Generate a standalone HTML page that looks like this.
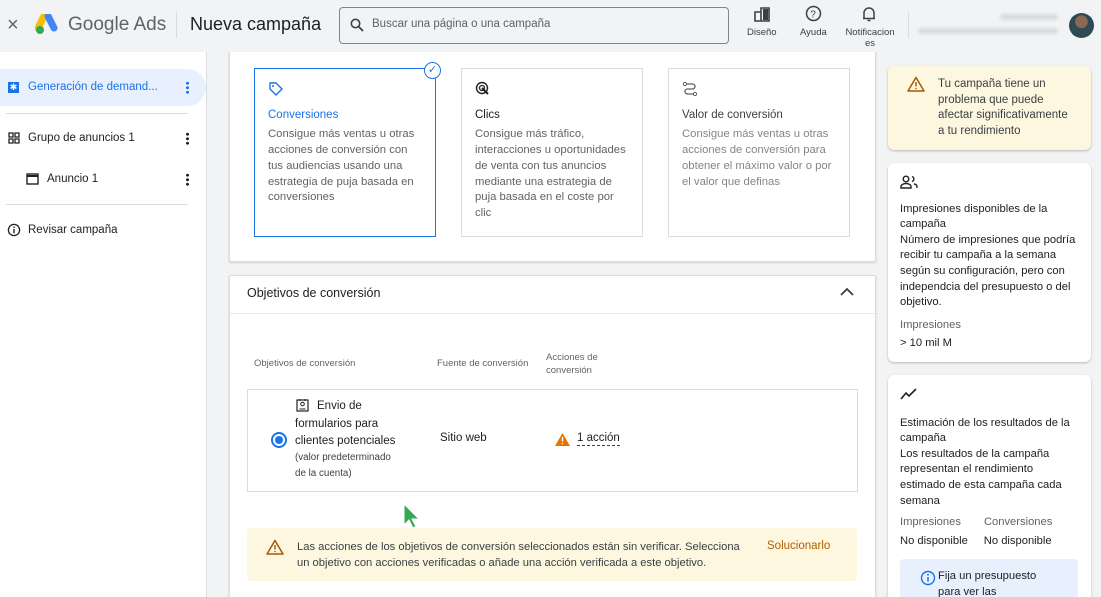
<!DOCTYPE html>
<html style="width:1101px;height:597px;overflow:hidden"><head><meta charset="utf-8"><style>
*{box-sizing:border-box;margin:0;padding:0}
body{width:1101px;height:597px;overflow:hidden;background:#f1f3f4;font-family:"Liberation Sans",sans-serif;color:#202124;position:relative}
.a{position:absolute}
.top{left:0;top:0;width:1101px;height:52px;background:#f1f3f4}
.side{left:0;top:52px;width:207px;height:545px;background:#fff;border-right:1px solid #dadce0}
.card{background:#fff;border:1px solid #dadce0;border-radius:2px}
.opt{position:absolute;top:68px;width:182px;height:169px;border:1px solid #dadce0;padding:12px 13px;font-size:11.3px;line-height:15.7px;color:#5f6368}
.opt b{display:block;font-weight:normal;font-size:11.5px;color:#202124;margin:6px 0 4px}
.rc{position:absolute;left:888px;width:203px;background:#fff;border-radius:6px;box-shadow:0 1px 2px rgba(0,0,0,.25);padding:12px 12px;font-size:11.2px;line-height:15.6px;overflow:hidden}
.dots{position:absolute;left:186px;width:3px;height:13px;background:radial-gradient(circle,#202124 1.4px,transparent 1.6px) 0 0/3px 4.5px repeat-y}
</style></head><body>
<div class="a card" style="left:229px;top:30px;width:647px;height:232px;box-shadow:0 1px 2px rgba(0,0,0,.15)"></div>
<div class="a top"></div>
<div class="a" style="left:7px;top:14px;font-size:20px;color:#5f6368">×</div>
<svg class="a" style="left:35px;top:14px" width="26" height="22" viewBox="0 0 26 22"><path d="M9 2 L3 14" stroke="#fbbc04" stroke-width="7" stroke-linecap="round"/><path d="M13 2 L19 14" stroke="#4285f4" stroke-width="7" stroke-linecap="round"/><circle cx="5" cy="16" r="4" fill="#34a853"/></svg>
<div class="a" style="left:68px;top:14px;font-size:19px;color:#5f6368">Google Ads</div>
<div class="a" style="left:176px;top:12px;width:1px;height:26px;background:#dadce0"></div>
<div class="a" style="left:190px;top:14px;font-size:18px;color:#202124">Nueva campaña</div>
<div class="a" style="left:339px;top:7px;width:390px;height:37px;border:1px solid #80868b;border-radius:4px"></div>
<svg class="a" style="left:350px;top:18px" width="14" height="14" viewBox="0 0 14 14"><circle cx="5.5" cy="5.5" r="4.2" stroke="#3c4043" stroke-width="1.6" fill="none"/><path d="M8.5 8.5 L13 13" stroke="#3c4043" stroke-width="1.8"/></svg>
<div class="a" style="left:372px;top:18px;font-size:11.5px;color:#5f6368">Buscar una página o una campaña</div>
<svg class="a" style="left:754px;top:6px" width="16" height="16"><path d="M1 6h6v9H1zM7 2h8v13H7z" fill="none" stroke="#3c4043" stroke-width="1.6"/><rect x="9" y="3" width="5" height="11" fill="#3c4043"/></svg>
<div class="a" style="left:747px;top:27px;font-size:9.5px;color:#3c4043">Diseño</div>
<svg class="a" style="left:805px;top:5px" width="17" height="17"><circle cx="8.5" cy="8.5" r="7" stroke="#3c4043" stroke-width="1.5" fill="none"/><text x="5.3" y="12.5" font-size="10" fill="#3c4043" font-family="Liberation Sans">?</text></svg>
<div class="a" style="left:800px;top:27px;font-size:9.5px;color:#3c4043">Ayuda</div>
<svg class="a" style="left:862px;top:6px" width="14" height="16"><path d="M2 12 V7 a5 5 0 0 1 10 0 V12 M1 12.5h12 M5.5 14.5h3" stroke="#3c4043" stroke-width="1.5" fill="none"/></svg>
<div class="a" style="left:838px;top:27px;font-size:9.5px;color:#3c4043;width:64px;text-align:center;line-height:11px">Notificacion<br>es</div>
<div class="a" style="left:908px;top:12px;width:1px;height:26px;background:#dadce0"></div>
<div class="a" style="left:1000px;top:14px;width:58px;height:6px;background:#d8dadc;border-radius:3px;filter:blur(1.5px)"></div>
<div class="a" style="left:918px;top:28px;width:140px;height:6px;background:#d8dadc;border-radius:3px;filter:blur(1.5px)"></div>
<div class="a" style="left:1069px;top:13px;width:25px;height:25px;border-radius:50%;background:radial-gradient(circle at 50% 35%,#8a6a55 30%,#2d4a55 32%)"></div>

<div class="a side"></div>
<div class="a" style="left:0;top:69px;width:206px;height:37px;background:#e8f0fe;border-radius:0 19px 19px 0"></div>
<div class="a" style="left:8px;top:82px;width:11px;height:11px;background:#1a73e8;color:#fff;font-size:9px;line-height:11px;text-align:center">✱</div>
<div class="a" style="left:28px;top:81px;font-size:11.5px;color:#1a73e8">Generación de demand...</div>
<div class="dots" style="top:81px;background:radial-gradient(circle,#1a73e8 1.4px,transparent 1.6px) 0 0/3px 4.5px repeat-y"></div>
<div class="a" style="left:6px;top:113px;width:182px;height:1px;background:#dadce0"></div>
<svg class="a" style="left:8px;top:132px" width="12" height="12"><path d="M1 1h4v4H1zM7 1h4v4H7zM1 7h4v4H1zM7 7h4v4H7z" fill="none" stroke="#202124" stroke-width="1.3"/></svg>
<div class="a" style="left:28px;top:132px;font-size:11.5px">Grupo de anuncios 1</div>
<div class="dots" style="top:132px"></div>
<svg class="a" style="left:26px;top:173px" width="13" height="12"><rect x="1" y="1" width="11" height="10" fill="none" stroke="#202124" stroke-width="1.4"/><path d="M1 3h11" stroke="#202124" stroke-width="2"/></svg>
<div class="a" style="left:47px;top:173px;font-size:11.5px">Anuncio 1</div>
<div class="dots" style="top:173px"></div>
<div class="a" style="left:6px;top:204px;width:182px;height:1px;background:#dadce0"></div>
<svg class="a" style="left:7px;top:223px" width="14" height="14"><circle cx="7" cy="7" r="5.6" fill="none" stroke="#202124" stroke-width="1.3"/><path d="M7 6v4.2" stroke="#202124" stroke-width="1.4"/><circle cx="7" cy="4.2" r=".8" fill="#202124"/></svg>
<div class="a" style="left:28px;top:224px;font-size:11.5px">Revisar campaña</div>

<div class="opt" style="left:254px;border:1.5px solid #1a73e8">
<svg width="16" height="16" viewBox="0 0 16 16"><path d="M2 2h6l6 6-6 6-6-6z" fill="none" stroke="#1a73e8" stroke-width="1.4" stroke-linejoin="round"/><circle cx="5" cy="5" r="1" fill="#1a73e8"/></svg>
<b style="color:#1a73e8;margin-top:5px">Conversiones</b>Consigue más ventas u otras acciones de conversión con tus audiencias usando una estrategia de puja basada en conversiones</div>
<div class="a" style="left:424px;top:62px;width:17px;height:17px;border-radius:50%;background:#fff;border:1.5px solid #1a73e8;color:#1a73e8;font-size:11px;line-height:14px;text-align:center">✓</div>
<div class="opt" style="left:461px"><svg width="16" height="16"><circle cx="7" cy="7" r="5.5" fill="none" stroke="#202124" stroke-width="1.4"/><circle cx="7" cy="7" r="2.5" fill="none" stroke="#202124" stroke-width="1.3"/><path d="M7 7l6 6" stroke="#202124" stroke-width="2"/></svg><b style="margin-top:5px">Clics</b>Consigue más tráfico, interacciones u oportunidades de venta con tus anuncios mediante una estrategia de puja basada en el coste por clic</div>
<div class="opt" style="left:668px;color:#80868b"><svg width="16" height="16"><circle cx="3" cy="3" r="1.6" fill="none" stroke="#5f6368"/><circle cx="13" cy="13" r="1.6" fill="none" stroke="#5f6368"/><path d="M4.5 3h6a2.5 2.5 0 0 1 0 5h-5a2.5 2.5 0 0 0 0 5h6" fill="none" stroke="#5f6368" stroke-width="1.3"/></svg><b style="color:#3c4043;margin-top:5px">Valor de conversión</b>Consigue más ventas u otras acciones de conversión para obtener el máximo valor o por el valor que definas</div>

<div class="a card" style="left:229px;top:275px;width:647px;height:330px;box-shadow:0 1px 2px rgba(0,0,0,.15)"></div>
<div class="a" style="left:247px;top:286px;font-size:12.5px">Objetivos de conversión</div>
<svg class="a" style="left:840px;top:287px" width="14" height="10"><path d="M1 8l6-6 6 6" fill="none" stroke="#3c4043" stroke-width="1.8"/></svg>
<div class="a" style="left:230px;top:313px;width:645px;height:1px;background:#e8eaed"></div>
<div class="a" style="left:254px;top:358px;font-size:9.5px;color:#5f6368">Objetivos de conversión</div>
<div class="a" style="left:437px;top:358px;font-size:9.5px;color:#5f6368">Fuente de conversión</div>
<div class="a" style="left:546px;top:351px;font-size:9.5px;color:#5f6368;line-height:13px">Acciones de<br>conversión</div>
<div class="a" style="left:247px;top:389px;width:611px;height:103px;border:1px solid #dadce0"></div>
<div class="a" style="left:271px;top:432px;width:16px;height:16px;border-radius:50%;border:2px solid #1a73e8"></div>
<div class="a" style="left:275px;top:436px;width:8px;height:8px;border-radius:50%;background:#1a73e8"></div>
<svg class="a" style="left:296px;top:398px" width="13" height="14"><rect x="1" y="2" width="11" height="11" fill="none" stroke="#202124" stroke-width="1.2"/><circle cx="6.5" cy="6" r="1.8" fill="none" stroke="#202124"/><path d="M3.5 11h6M4 1v2M9 1v2" stroke="#202124"/></svg>
<div class="a" style="left:295px;top:398px;font-size:11.5px;line-height:17.5px;width:140px"><span style="margin-left:22px">Envio de</span><br>formularios para<br>clientes potenciales</div>
<div class="a" style="left:295px;top:450px;font-size:9.8px;line-height:15.5px;color:#3c4043">(valor predeterminado<br>de la cuenta)</div>
<div class="a" style="left:440px;top:432px;font-size:11.5px">Sitio web</div>
<svg class="a" style="left:555px;top:433px" width="15" height="13"><path d="M7.5 0L15 13H0z" fill="#e37400"/><path d="M7.5 4v4.5" stroke="#fff" stroke-width="1.5"/><circle cx="7.5" cy="10.5" r=".8" fill="#fff"/></svg>
<div class="a" style="left:577px;top:432px;font-size:11.5px;border-bottom:1px dashed #3c4043;line-height:13px">1 acción</div>
<svg class="a" style="left:403px;top:503px" width="18" height="26"><path d="M1 1L1 22 6 17 10 25 13 23.5 9 16 16 16z" fill="#34a853" stroke="#fff" stroke-width="1"/></svg>
<div class="a" style="left:247px;top:528px;width:610px;height:53px;background:#fef7e0;border-radius:4px"></div>
<svg class="a" style="left:266px;top:539px" width="18" height="16"><path d="M9 1.5L17 15H1z" fill="none" stroke="#a05a00" stroke-width="1.5" stroke-linejoin="round"/><path d="M9 6v4.5" stroke="#a05a00" stroke-width="1.4"/><circle cx="9" cy="12.5" r=".8" fill="#a05a00"/></svg>
<div class="a" style="left:297px;top:540px;font-size:11.2px;line-height:15.5px;color:#3c4043">Las acciones de los objetivos de conversión seleccionados están sin verificar. Selecciona<br>un objetivo con acciones verificadas o añade una acción verificada a este objetivo.</div>
<div class="a" style="left:767px;top:540px;font-size:11.5px;color:#b06000">Solucionarlo</div>

<div class="rc" style="top:66px;height:84px;background:#fef7e0;padding-left:50px;color:#3c4043;padding-top:11px;font-size:11.5px">
<svg class="a" style="left:19px;top:10px" width="18" height="16"><path d="M9 1.5L17 15H1z" fill="none" stroke="#a05a00" stroke-width="1.5" stroke-linejoin="round"/><path d="M9 6v4.5" stroke="#a05a00" stroke-width="1.4"/><circle cx="9" cy="12.5" r=".8" fill="#a05a00"/></svg>
Tu campaña tiene un<br>problema que puede<br>afectar significativamente<br>a tu rendimiento</div>
<div class="rc" style="top:163px;height:199px">
<svg width="18" height="14"><circle cx="6" cy="4" r="2.8" fill="none" stroke="#202124" stroke-width="1.4"/><path d="M1 13v-1.5c0-2 3-3 5-3s5 1 5 3V13zM12 1.5a2.6 2.6 0 0 1 0 5M14 8.8c1.5.5 3 1.2 3 2.7V13" fill="none" stroke="#202124" stroke-width="1.4"/></svg>
<div style="margin-top:7px">Impresiones disponibles de la campaña</div>
<div>Número de impresiones que podría recibir tu campaña a la semana según su configuración, pero con independcia del presupuesto o del objetivo.</div>
<div style="margin-top:7px;color:#5f6368">Impresiones</div>
<div style="margin-top:3px">&gt; 10 mil M</div></div>
<div class="rc" style="top:375px;height:240px">
<svg width="18" height="14"><path d="M1 12l5-6 3 3 7-7" fill="none" stroke="#202124" stroke-width="1.6"/></svg>
<div style="margin-top:9px">Estimación de los resultados de la campaña</div>
<div>Los resultados de la campaña representan el rendimiento estimado de esta campaña cada semana</div>
<div style="margin-top:6px;color:#5f6368">Impresiones<span style="margin-left:23px">Conversiones</span></div>
<div style="margin-top:3px">No disponible<span style="margin-left:16px">No disponible</span></div>
<div style="position:absolute;left:12px;top:184px;width:178px;height:60px;background:#e8f0fe;border-radius:4px;padding:10px 0 0 38px">Fija un presupuesto<br>para ver las</div>
<svg style="position:absolute;left:32px;top:195px" width="16" height="16"><circle cx="8" cy="8" r="6.5" fill="none" stroke="#1a73e8" stroke-width="1.4"/><path d="M8 7v4.5" stroke="#1a73e8" stroke-width="1.5"/><circle cx="8" cy="4.7" r=".9" fill="#1a73e8"/></svg>
</div>
</body></html>
